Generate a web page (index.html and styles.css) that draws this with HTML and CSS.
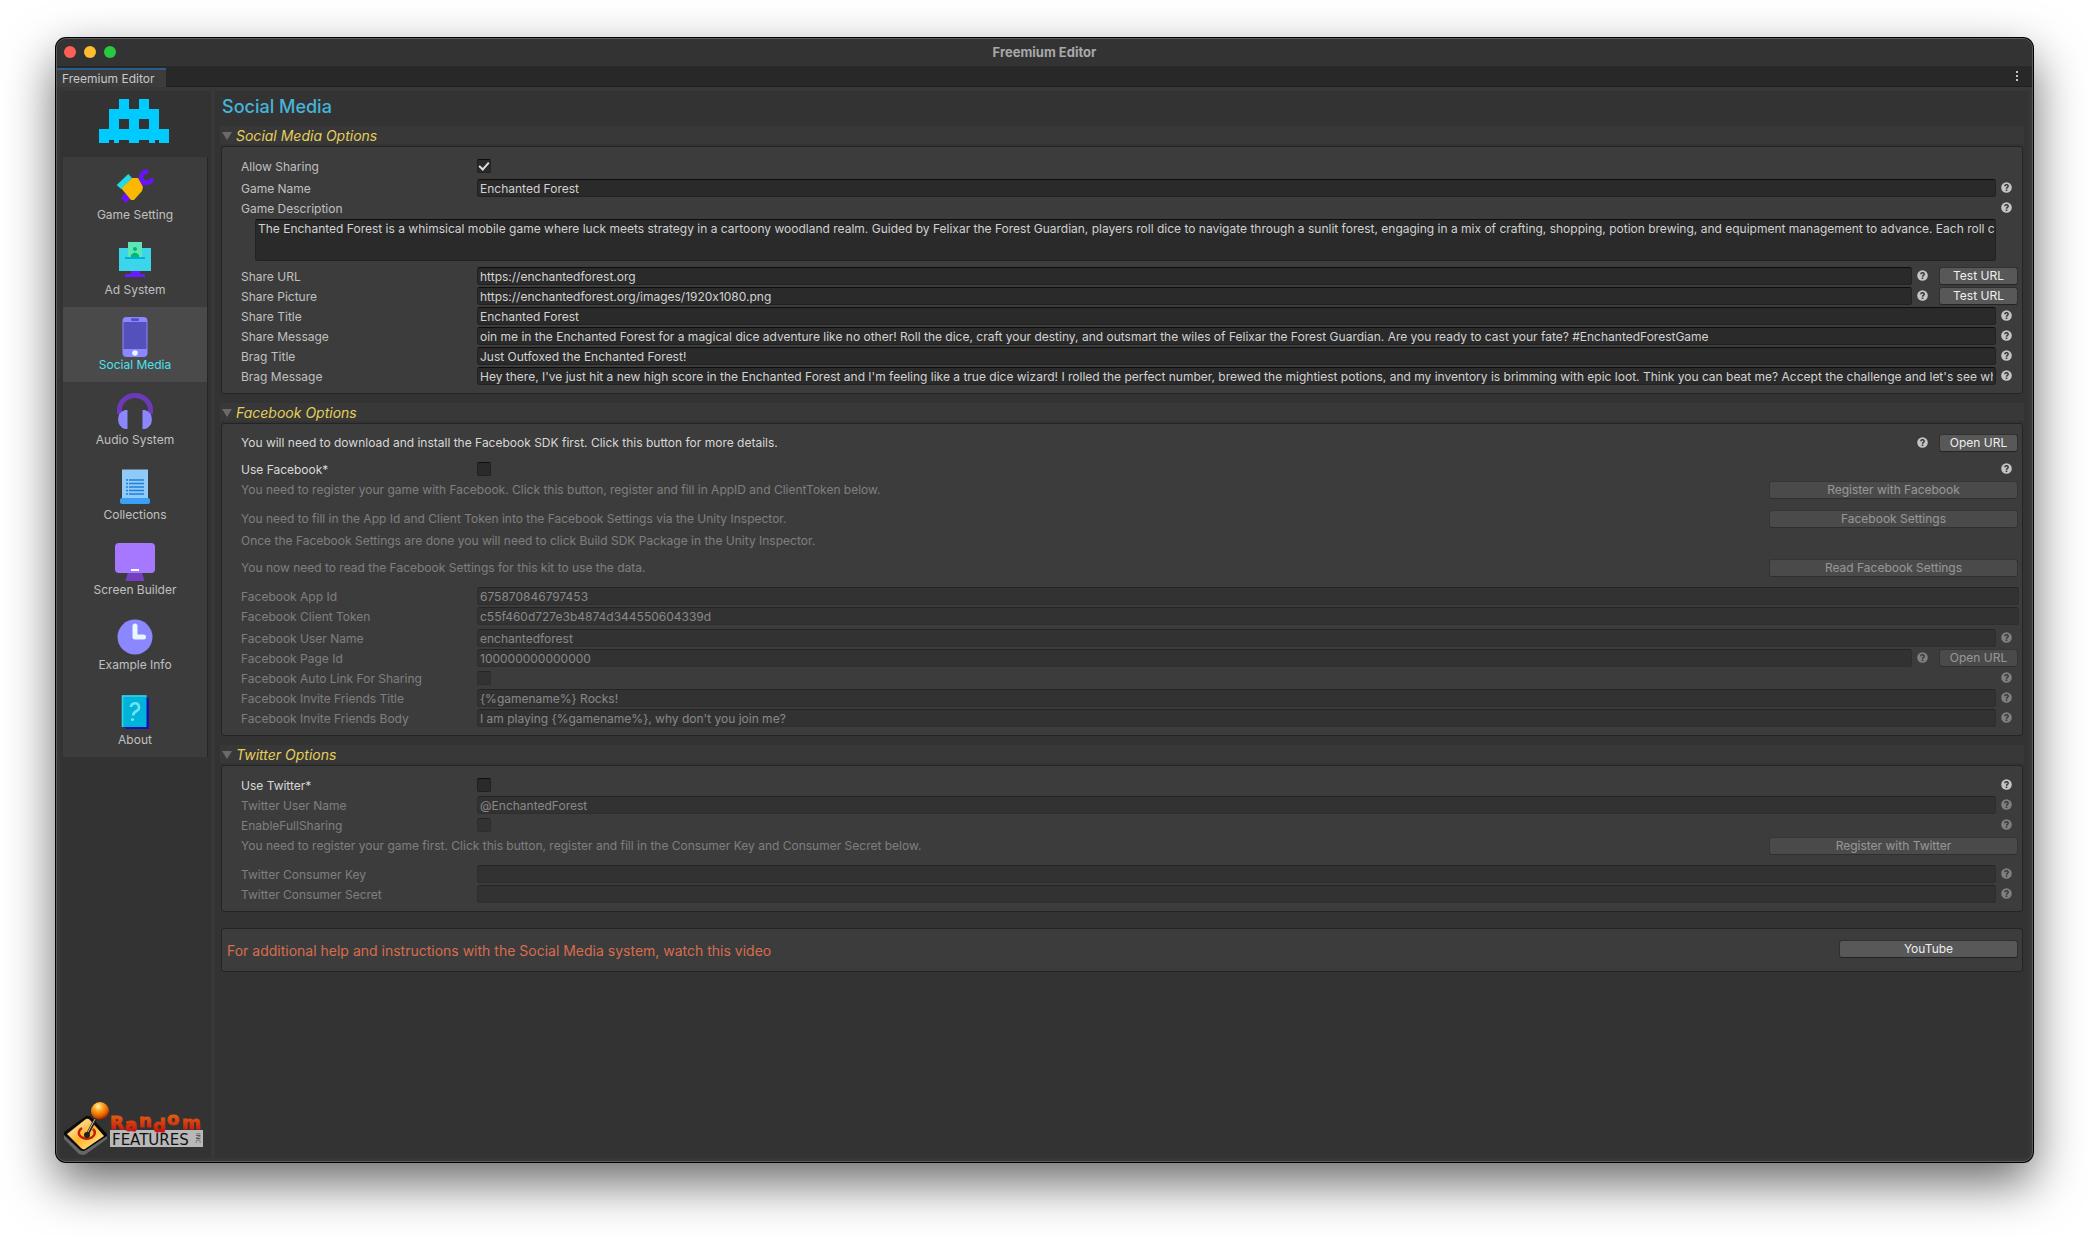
FILE: index.html
```html
<!DOCTYPE html>
<html lang="en">
	<head>
		<meta charset="UTF-8" />
		<meta name="viewport" content="width=device-width, initial-scale=1.0" />
		<title>Freemium Editor</title>
		<link rel="stylesheet" href="styles.css">
	</head>
	<body>
		<svg class="defs" aria-hidden="true">
			<symbol id="help" viewBox="0 0 11 11">
				<circle cx="5.5" cy="5.5" r="5.3" fill="#c4c4c4" />
				<path d="M3.8 4.3a1.7 1.5 0 1 1 2.6 1.2q-.9.5-.9 1.2" fill="none" stroke="#383838" stroke-width="1.5" />
				<rect x="4.7" y="7.5" width="1.6" height="1.5" fill="#383838" />
			</symbol>
		</svg>

		<div class="window">
			<header class="titlebar">
				<div class="lights"><i class="red"></i><i class="yellow"></i><i class="green"></i></div>
				<span class="window-title">Freemium Editor</span>
			</header>
			<div class="tabbar">
				<a class="tab" href="#">Freemium Editor</a>
				<button type="button" class="menu" aria-label="Menu"><i></i><i></i><i></i></button>
			</div>

			<div class="content">
				<aside class="sidebar">
					<svg class="invader" viewBox="0 0 70 44" shape-rendering="crispEdges">
						<path fill="#00cbff" fill-rule="evenodd" d="M20 0H30V10H40V0H50V10H60V30H70V44H60V41H56V44H50V41H40V44H30V41H20V44H15V41H10V44H0V30H10V10H20ZM20 20V30H30V20ZM40 20V30H50V20Z" />
					</svg>
					<nav class="nav">
						<a href="#">
							<svg viewBox="0 0 40 40">
								<path fill="#6a12ff" d="M6 31l4-5 6 5-5 5z" />
								<path d="M33 5A5.500 5.500 0 1 0 37 11.500M29 14l-6 6" fill="none" stroke="#6a12ff" stroke-width="4.500" />
								<path fill="#fab900" d="M6 21L17 11h6l5 9-1 4-8 9-3 0z" />
								<path fill="#22dbe2" d="M1.700 18L13.300 7l3.700 4L6 22z" />
							</svg>
							<span>Game Setting</span>
						</a>
						<a href="#">
							<svg viewBox="0 0 40 40">
								<rect x="4" y="6" width="32" height="23" fill="#3cd6ea" />
								<rect x="13" y="0" width="14" height="16" fill="#5fe6b8" />
								<circle cx="20" cy="7" r="2" fill="#00b871" />
								<path d="M16 15v-2q4-5 8 0v2z" fill="#00b871" />
								<rect x="10" y="15" width="20" height="2" fill="#00aeda" />
								<path d="M16 29h9v3h5v3H10v-3h6z" fill="#6a1bff" />
							</svg>
							<span>Ad System</span>
						</a>
						<a href="#" class="active">
							<svg viewBox="0 0 40 40">
								<rect x="7.500" width="25" height="40" rx="4" fill="#8b87ff" />
								<rect x="8.500" y="5" width="23" height="27" fill="#5650bd" />
								<rect x="16" y="1.300" width="8" height="2.600" rx="1" fill="#5650bd" />
								<circle cx="20" cy="36" r="2.800" fill="#e8f6ff" />
							</svg>
							<span>Social Media</span>
						</a>
						<a href="#">
							<svg viewBox="0 0 40 40">
								<path d="M4.500 22v-4a15.500 14.500 0 0 1 31 0v4" fill="none" stroke="#6d39bb" stroke-width="5" />
								<path d="M12.500 18v19H10A10 10 0 0 1 10 18zM27.500 18v19H30A10 10 0 0 0 30 18z" fill="#8b87ff" />
							</svg>
							<span>Audio System</span>
						</a>
						<a href="#">
							<svg viewBox="0 0 40 40">
								<rect x="7" y="2.500" width="26" height="30" fill="#90caf9" />
								<rect x="5" y="31" width="30" height="6" rx="2" fill="#3aa0f5" />
								<path d="M11 13h2M14 13h15M11 16.500h2M14 16.500h15M11 20h2M14 20h15M11 23.500h2M14 23.500h15M11 27h2M14 27h15" stroke="#1f80d6" stroke-width="1.500" />
							</svg>
							<span>Collections</span>
						</a>
						<a href="#">
							<svg viewBox="0 0 40 40">
								<path d="M13 30h14l2.500 9h-19z" fill="#7440bd" />
								<rect y="1" width="40" height="30" rx="4" fill="#a678ff" />
								<rect x="16" y="27" width="8" height="2" fill="#fff" />
							</svg>
							<span>Screen Builder</span>
						</a>
						<a href="#">
							<svg viewBox="0 0 40 40">
								<circle cx="20" cy="20" r="17.500" fill="#8b87ff" />
								<path d="M20 9v11h8.500" fill="none" stroke="#e8f6ff" stroke-width="5" stroke-linecap="round" stroke-linejoin="round" />
							</svg>
							<span>Example Info</span>
						</a>
						<a href="#">
							<svg viewBox="0 0 40 40">
								<path d="M9 6h25v31H11L8 34z" fill="#1a0fae" />
								<rect x="7" y="3.500" width="24.500" height="31.500" fill="#00b3da" />
								<path d="M7.500 35V4h24" fill="none" stroke="#35d6ea" stroke-width="1.500" />
								<path d="M16 15a4 4 0 1 1 5.500 4Q18.500 20.500 18 23.500" fill="none" stroke="#6fe3f2" stroke-width="2.600" />
								<circle cx="17.500" cy="27.500" r="1.600" fill="#6fe3f2" />
							</svg>
							<span>About</span>
						</a>
					</nav>
					<svg class="brand" viewBox="0 0 144 58">
						<defs>
							<radialGradient id="ball" cx=".4" cy=".25" r=".75">
								<stop offset="0" stop-color="#fff6b0" />
								<stop offset=".35" stop-color="#ffa61e" />
								<stop offset=".75" stop-color="#e05a00" />
								<stop offset="1" stop-color="#7d1d00" />
							</radialGradient>
							<linearGradient id="plate" x1="0" y1="0" x2="1" y2="1">
								<stop offset="0" stop-color="#fff8e0" />
								<stop offset=".5" stop-color="#ffb62e" />
								<stop offset="1" stop-color="#fff0a0" />
							</linearGradient>
							<linearGradient id="red" gradientUnits="userSpaceOnUse" x1="0" y1="18" x2="0" y2="36">
								<stop offset="0" stop-color="#e05a10" />
								<stop offset="1" stop-color="#c20a0a" />
							</linearGradient>
						</defs>
						<path d="M1 34L23 18q4-1 6 2L44 36v5L23 55q-3 3-7 0L1 40z" fill="#0c0c0c" />
						<path d="M1 37L17 52q3 2 6 0L44 38v3L23 56q-3 2-7 0L1 41z" fill="#666" />
						<path d="M4 36L23 21q2-1 4 1L41 38 22 51q-2 1-4-1z" fill="url(#plate)" />
						<path d="M19 30a8 6 0 1 0 11 1" fill="none" stroke="#c41e00" stroke-width="2.500" />
						<circle cx="24" cy="37" r="3" fill="#222" />
						<path d="M24 37L33 20" stroke="#222" stroke-width="3" />
						<path d="M25 34L32 21" stroke="#bbb" stroke-width="1" />
						<circle cx="37" cy="13" r="9" fill="url(#ball)" />
						<rect x="47" y="32" width="93" height="17" fill="#b8b8b8" />
						<text class="brand-red" x="47 62 76 90 104 119" y="31 33 29 34 27 31">Random</text>
						<text class="brand-name" x="49" y="47">FEATURES</text>
						<text class="brand-inc" transform="translate(133 35) rotate(90)">INC</text>
					</svg>
				</aside>

				<main class="main">
					<h1>Social Media</h1>

					<details open>
						<summary>Social Media Options</summary>
						<div class="box">
							<div class="row gap-s">
								<label for="allow">Allow Sharing</label>
								<input type="checkbox" id="allow" checked />
							</div>
							<div class="row">
								<label for="game-name">Game Name</label>
								<input type="text" id="game-name" value="Enchanted Forest" />
								<svg class="help"><use href="#help" /></svg>
							</div>
							<div class="row">
								<label for="game-desc">Game Description</label>
								<svg class="help"><use href="#help" /></svg>
							</div>
							<textarea id="game-desc" wrap="off">The Enchanted Forest is a whimsical mobile game where luck meets strategy in a cartoony woodland realm. Guided by Felixar the Forest Guardian, players roll dice to navigate through a sunlit forest, engaging in a mix of crafting, shopping, potion brewing, and equipment management to advance. Each roll could lead</textarea>
							<div class="row">
								<label for="share-url">Share URL</label>
								<input type="text" id="share-url" value="https://enchantedforest.org" />
								<svg class="help"><use href="#help" /></svg>
								<button type="button">Test URL</button>
							</div>
							<div class="row">
								<label for="share-picture">Share Picture</label>
								<input type="text" id="share-picture" value="https://enchantedforest.org/images/1920x1080.png" />
								<svg class="help"><use href="#help" /></svg>
								<button type="button">Test URL</button>
							</div>
							<div class="row">
								<label for="share-title">Share Title</label>
								<input type="text" id="share-title" value="Enchanted Forest" />
								<svg class="help"><use href="#help" /></svg>
							</div>
							<div class="row">
								<label for="share-message">Share Message</label>
								<input type="text" id="share-message" value="oin me in the Enchanted Forest for a magical dice adventure like no other! Roll the dice, craft your destiny, and outsmart the wiles of Felixar the Forest Guardian. Are you ready to cast your fate? #EnchantedForestGame" />
								<svg class="help"><use href="#help" /></svg>
							</div>
							<div class="row">
								<label for="brag-title">Brag Title</label>
								<input type="text" id="brag-title" value="Just Outfoxed the Enchanted Forest!" />
								<svg class="help"><use href="#help" /></svg>
							</div>
							<div class="row">
								<label for="brag-message">Brag Message</label>
								<input type="text" id="brag-message" value="Hey there, I've just hit a new high score in the Enchanted Forest and I'm feeling like a true dice wizard! I rolled the perfect number, brewed the mightiest potions, and my inventory is brimming with epic loot. Think you can beat me? Accept the challenge and let's see who's the" />
								<svg class="help"><use href="#help" /></svg>
							</div>
						</div>
					</details>

					<details open>
						<summary>Facebook Options</summary>
						<div class="box">
							<div class="row bright gap-m">
								<p>You will need to download and install the Facebook SDK first. Click this button for more details.</p>
								<svg class="help"><use href="#help" /></svg>
								<button type="button">Open URL</button>
							</div>
							<div class="row bright">
								<label for="use-fb">Use Facebook*</label>
								<input type="checkbox" id="use-fb" />
								<svg class="help"><use href="#help" /></svg>
							</div>
							<div class="row note off">
								<p>You need to register your game with Facebook. Click this button, register and fill in AppID and ClientToken below.</p>
								<button type="button" class="long" disabled>Register with Facebook</button>
							</div>
							<div class="row note off gap-s">
								<p>You need to fill in the App Id and Client Token into the Facebook Settings via the Unity Inspector.</p>
								<button type="button" class="long" disabled>Facebook Settings</button>
							</div>
							<div class="row off gap-m">
								<p>Once the Facebook Settings are done you will need to click Build SDK Package in the Unity Inspector.</p>
							</div>
							<div class="row note off">
								<p>You now need to read the Facebook Settings for this kit to use the data.</p>
								<button type="button" class="long" disabled>Read Facebook Settings</button>
							</div>
							<div class="row off">
								<label for="fb-app">Facebook App Id</label>
								<input type="text" id="fb-app" value="675870846797453" disabled />
							</div>
							<div class="row off gap-s">
								<label for="fb-token">Facebook Client Token</label>
								<input type="text" id="fb-token" value="c55f460d727e3b4874d344550604339d" disabled />
							</div>
							<div class="row off">
								<label for="fb-user">Facebook User Name</label>
								<input type="text" id="fb-user" value="enchantedforest" disabled />
								<svg class="help"><use href="#help" /></svg>
							</div>
							<div class="row off">
								<label for="fb-page">Facebook Page Id</label>
								<input type="text" id="fb-page" value="100000000000000" disabled />
								<svg class="help"><use href="#help" /></svg>
								<button type="button" disabled>Open URL</button>
							</div>
							<div class="row off">
								<label for="fb-auto">Facebook Auto Link For Sharing</label>
								<input type="checkbox" id="fb-auto" disabled />
								<svg class="help"><use href="#help" /></svg>
							</div>
							<div class="row off">
								<label for="fb-title">Facebook Invite Friends Title</label>
								<input type="text" id="fb-title" value="{%gamename%} Rocks!" disabled />
								<svg class="help"><use href="#help" /></svg>
							</div>
							<div class="row off">
								<label for="fb-body">Facebook Invite Friends Body</label>
								<input type="text" id="fb-body" value="I am playing {%gamename%}, why don't you join me?" disabled />
								<svg class="help"><use href="#help" /></svg>
							</div>
						</div>
					</details>

					<details open>
						<summary>Twitter Options</summary>
						<div class="box">
							<div class="row bright">
								<label for="use-tw">Use Twitter*</label>
								<input type="checkbox" id="use-tw" />
								<svg class="help"><use href="#help" /></svg>
							</div>
							<div class="row off">
								<label for="tw-user">Twitter User Name</label>
								<input type="text" id="tw-user" value="@EnchantedForest" disabled />
								<svg class="help"><use href="#help" /></svg>
							</div>
							<div class="row off">
								<label for="tw-full">EnableFullSharing</label>
								<input type="checkbox" id="tw-full" disabled />
								<svg class="help"><use href="#help" /></svg>
							</div>
							<div class="row note off">
								<p>You need to register your game first. Click this button, register and fill in the Consumer Key and Consumer Secret below.</p>
								<button type="button" class="long" disabled>Register with Twitter</button>
							</div>
							<div class="row off">
								<label for="tw-key">Twitter Consumer Key</label>
								<input type="text" id="tw-key" disabled />
								<svg class="help"><use href="#help" /></svg>
							</div>
							<div class="row off">
								<label for="tw-secret">Twitter Consumer Secret</label>
								<input type="text" id="tw-secret" disabled />
								<svg class="help"><use href="#help" /></svg>
							</div>
						</div>
					</details>

					<div class="box video">
						<p>For additional help and instructions with the Social Media system, watch this video</p>
						<button type="button">YouTube</button>
					</div>
				</main>
			</div>
		</div>
	</body>
</html>
```
FILE: styles.css
```css
* {
	box-sizing: border-box;
}
body {
	display: flex;
	min-height: 100vh;
	margin: 0;
	padding: 38px 56px 74px;
	background: #fff;
	color: #c0c0c0;
	font-family: Inter, sans-serif;
	font-size: 12px;
	font-variant-ligatures: none;
	line-height: 16px;
}
p {
	margin: 0;
}
input,
textarea,
button {
	margin: 0;
	font-family: inherit;
	font-size: inherit;
	font-variant-ligatures: inherit;
	line-height: inherit;
	color: #d2d2d2;
}
.defs {
	position: absolute;
	width: 0;
	height: 0;
}

/* window frame */
.window {
	flex: 1;
	min-width: 0;
	display: flex;
	flex-direction: column;
	overflow: hidden;
	border: 1px solid #5c5c5c;
	border-radius: 10px;
	background: #383838;
	box-shadow: 0 0 0 1px #000, 0 20px 50px rgba(0, 0, 0, 0.6);
}
.titlebar {
	display: grid;
	grid-template-columns: 1fr auto 1fr;
	align-items: center;
	height: 27px;
	padding: 0 7px 1px;
	background: #333;
}
.lights {
	display: flex;
	gap: 8px;
}
.lights i {
	width: 12px;
	height: 12px;
	border-radius: 50%;
}
.red {
	background: #ff5f57;
}
.yellow {
	background: #febc2e;
}
.green {
	background: #28c840;
}
.window-title {
	color: #a8a8a8;
	font-size: 13px;
	font-weight: 700;
}
.tabbar {
	display: flex;
	justify-content: space-between;
	height: 21px;
	padding-top: 2px;
	background: #282828;
	border-bottom: 1px solid #1f1f1f;
}
.tab {
	height: 19px;
	padding: 0 12px 0 5px;
	border-top: 2px solid #2c5d87;
	background: #3c3c3c;
	color: #c8c8c8;
	line-height: 18px;
	text-decoration: none;
}
.menu {
	display: flex;
	flex-direction: column;
	align-items: center;
	gap: 2px;
	width: 12px;
	margin-right: 9px;
	padding: 3px 0;
	border: 0;
	background: none;
}
.menu i {
	width: 2px;
	height: 2px;
	background: #c4c4c4;
}
.content {
	flex: 1;
	display: flex;
	gap: 4px;
	padding: 4px 3px 3px;
}

/* sidebar */
.sidebar {
	flex: none;
	display: flex;
	flex-direction: column;
	width: 151px;
	padding: 8px 3px 2px;
	background: #333;
}
.invader {
	width: 70px;
	height: 44px;
	margin: 0 auto 14px 36px;
}
.nav {
	border-right: 1px solid #262626;
	background: #3c3c3c;
}
.nav a {
	display: flex;
	flex-direction: column;
	align-items: center;
	height: 75px;
	padding-top: 10px;
	color: #c0c0c0;
	text-decoration: none;
}
.nav .active {
	background: #4a4a4a;
	color: #4fe0ee;
}
.nav svg {
	width: 40px;
	height: 40px;
}
.brand {
	width: 144px;
	height: 58px;
	margin-top: auto;
}
.brand-red {
	fill: url(#red);
	stroke: url(#red);
	font: 700 18px "DejaVu Sans", sans-serif;
}
.brand-name {
	fill: #111;
	font: 15px "DejaVu Sans", sans-serif;
}
.brand-inc {
	fill: #444;
	font: 6px "DejaVu Sans", sans-serif;
}

/* settings panel */
.main {
	flex: 1;
	min-width: 0;
	padding: 0 5px;
	background: #333;
}
h1 {
	margin: 0 0 3px 2px;
	color: #46b4d8;
	font-size: 18px;
	font-weight: 500;
	line-height: 32px;
}
details {
	margin-bottom: 9px;
}
summary {
	display: flex;
	align-items: center;
	height: 18px;
	margin-bottom: 2px;
	padding: 1px 0 0 2px;
	background: #383838;
	color: #e5cf5b;
	font-size: 14px;
	font-style: italic;
	line-height: 17px;
	list-style: none;
}
summary::before {
	content: "";
	margin-right: 4px;
	border: solid transparent;
	border-width: 8px 5px 0;
	border-top-color: #6a6a6a;
}
.box {
	display: flex;
	flex-direction: column;
	margin: 0 1px;
	padding: 10px 3px 6px 19px;
	border: 1px solid #242424;
	border-radius: 3px;
	background: #3c3c3c;
}
.row {
	display: flex;
	align-items: center;
	height: 18px;
	margin-bottom: 2px;
}
.row label {
	flex: none;
	width: 236px;
	padding-top: 2px;
}
.row p {
	flex: 1;
}
.note {
	margin: 1px 0 10px;
}
.gap-s {
	margin-bottom: 4px;
}
.gap-m {
	margin-bottom: 8px;
}
.bright {
	color: #d8d8d8;
}
.off {
	opacity: 0.5;
}
input[type="text"],
textarea {
	border: 1px solid #212121;
	border-top-color: #0d0d0d;
	border-radius: 3px;
	background: #2a2a2a;
}
input[type="text"] {
	flex: 1;
	min-width: 0;
	height: 18px;
	padding: 0 2px;
}
textarea {
	height: 42px;
	margin: 0 23px 6px 14px;
	padding: 1px 2px;
	overflow: hidden;
	resize: none;
}
input[type="checkbox"] {
	appearance: none;
	display: grid;
	place-items: center;
	width: 14px;
	height: 14px;
	border: 1px solid #212121;
	border-top-color: #0d0d0d;
	border-radius: 2px;
	background: #2a2a2a;
}
input[type="checkbox"]:checked::before {
	content: "";
	width: 4px;
	height: 8px;
	margin-bottom: 2px;
	border: solid #e0e0e0;
	border-width: 0 2px 2px 0;
	transform: rotate(42deg);
}
.help {
	flex: none;
	width: 11px;
	height: 11px;
	margin: 0 7px 1px 5px;
}
.row input[type="checkbox"] + .help,
.row label + .help {
	margin-left: auto;
}
button {
	padding: 0;
}
.row button,
.video button {
	flex: none;
	width: 79px;
	height: 18px;
	margin: 0 1px 0 4px;
	border: 1px solid #303030;
	border-bottom-color: #242424;
	border-radius: 3px;
	background: #585858;
	color: #eee;
}
.row .long {
	width: 249px;
}
.video {
	flex-direction: row;
	align-items: flex-start;
	justify-content: space-between;
	margin-top: 16px;
	padding: 11px 3px 9px 5px;
}
.video p {
	color: #d96c4f;
	font-size: 14px;
	line-height: 22px;
}
.video button {
	width: 179px;
}
```
